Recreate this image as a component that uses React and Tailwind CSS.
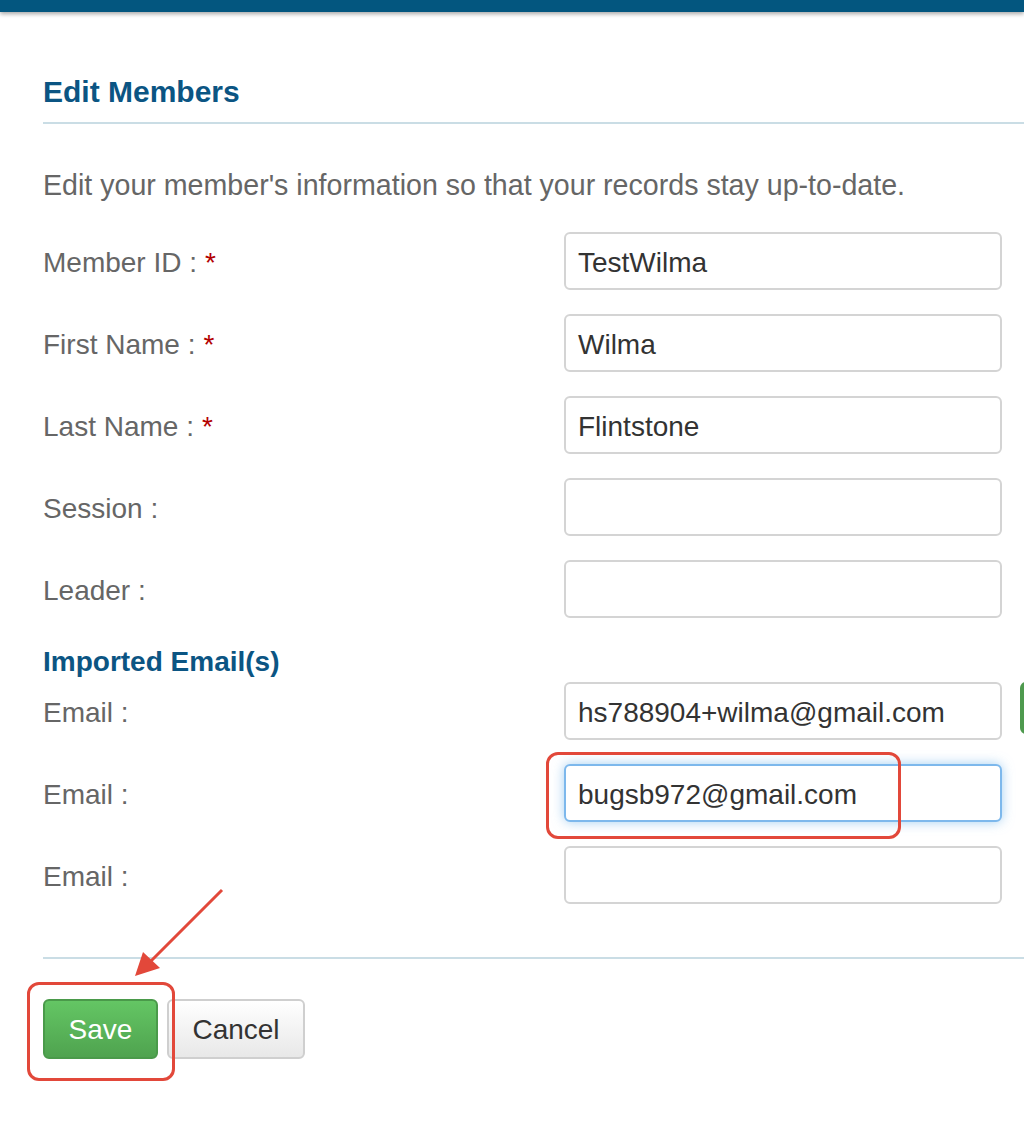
import React from 'react'

const fields = [
    { label: 'Member ID', required: true, value: 'TestWilma' },
    { label: 'First Name', required: true, value: 'Wilma' },
    { label: 'Last Name', required: true, value: 'Flintstone' },
    { label: 'Session', required: false, value: '' },
    { label: 'Leader', required: false, value: '' },
]

function Row({ label, required, value, focused, extra }) {
    return (
        <div className="flex items-center h-[58px]">
            <div className="w-[521px] shrink-0 pt-[3px] text-[28px] text-[#666]">
                {label} :{required && <span className="text-[#b30000] ml-[8px]">*</span>}
            </div>
            <div
                className={
                    focused
                        ? 'w-[438px] shrink-0 h-[58px] rounded-[6px] border-2 border-[#7db8ec] shadow-[0_0_12px_rgba(102,175,233,0.6)] bg-white flex items-center px-[12px] pt-[3px] text-[28px] text-[#333]'
                        : 'w-[438px] shrink-0 h-[58px] rounded-[6px] border-2 border-[#d4d4d4] bg-white flex items-center px-[12px] pt-[3px] text-[28px] text-[#333]'
                }
            >
                {value}
            </div>
            {extra && <div className="ml-[18px] shrink-0 w-[40px] h-[52px] self-start rounded-[6px] bg-[#4e9a4e]"></div>}
        </div>
    )
}

function App() {
    return (
        <div className="relative w-[1024px] h-[1130px] overflow-hidden bg-white font-['Liberation_Sans',Arial,sans-serif]">
            <div className="h-[12px] bg-[#03567f] shadow-[0_2px_4px_rgba(0,0,0,0.35)]"></div>

            <div className="pl-[43px]">
                <h2 className="mt-[62px] text-[30px] font-bold text-[#0b5583] leading-[36px]">Edit Members</h2>
                <div className="mt-[12px] h-[2px] bg-[#cadde5]"></div>

                <p className="mt-[46px] text-[28.6px] text-[#666] leading-[30px]">
                    Edit your member's information so that your records stay up-to-date.
                </p>

                <div className="mt-[32px] flex flex-col gap-[24px]">
                    {fields.map((f) => (
                        <Row key={f.label} {...f} />
                    ))}
                </div>

                <h3 className="mt-[29px] text-[28px] font-bold text-[#0b5583] leading-[30px]">Imported Email(s)</h3>

                <div className="mt-[5px] flex flex-col gap-[24px]">
                    <Row label="Email" value="hs788904+wilma@gmail.com" extra />
                    <Row label="Email" value="bugsb972@gmail.com" focused />
                    <Row label="Email" value="" />
                </div>

                <div className="mt-[53px] h-[2px] bg-[#cadde5]"></div>

                <div className="mt-[40px] flex gap-[9px]">
                    <button className="w-[115px] h-[60px] pt-[2px] rounded-[6px] border-2 border-[#4a9a4a] bg-gradient-to-b from-[#64c664] to-[#4fa34f] text-white text-[28px]">
                        Save
                    </button>
                    <button className="w-[138px] h-[60px] pt-[2px] rounded-[6px] border-2 border-[#cfcfcf] bg-gradient-to-b from-white to-[#e8e8e8] text-[#333] text-[28px]">
                        Cancel
                    </button>
                </div>
            </div>

            {/* annotations */}
            <div className="absolute left-[546px] top-[752px] w-[355px] h-[87px] rounded-[12px] border-[3px] border-[#e2483a]"></div>
            <div className="absolute left-[27px] top-[982px] w-[148px] h-[99px] rounded-[12px] border-[3px] border-[#e2483a]"></div>
            <svg className="absolute left-0 top-0" width="1024" height="1130">
                <line x1="222" y1="890" x2="150" y2="962" stroke="#e2483a" strokeWidth="3" />
                <polygon points="135,976 143,952 160,968" fill="#e2483a" />
            </svg>
        </div>
    )
}

export default App
